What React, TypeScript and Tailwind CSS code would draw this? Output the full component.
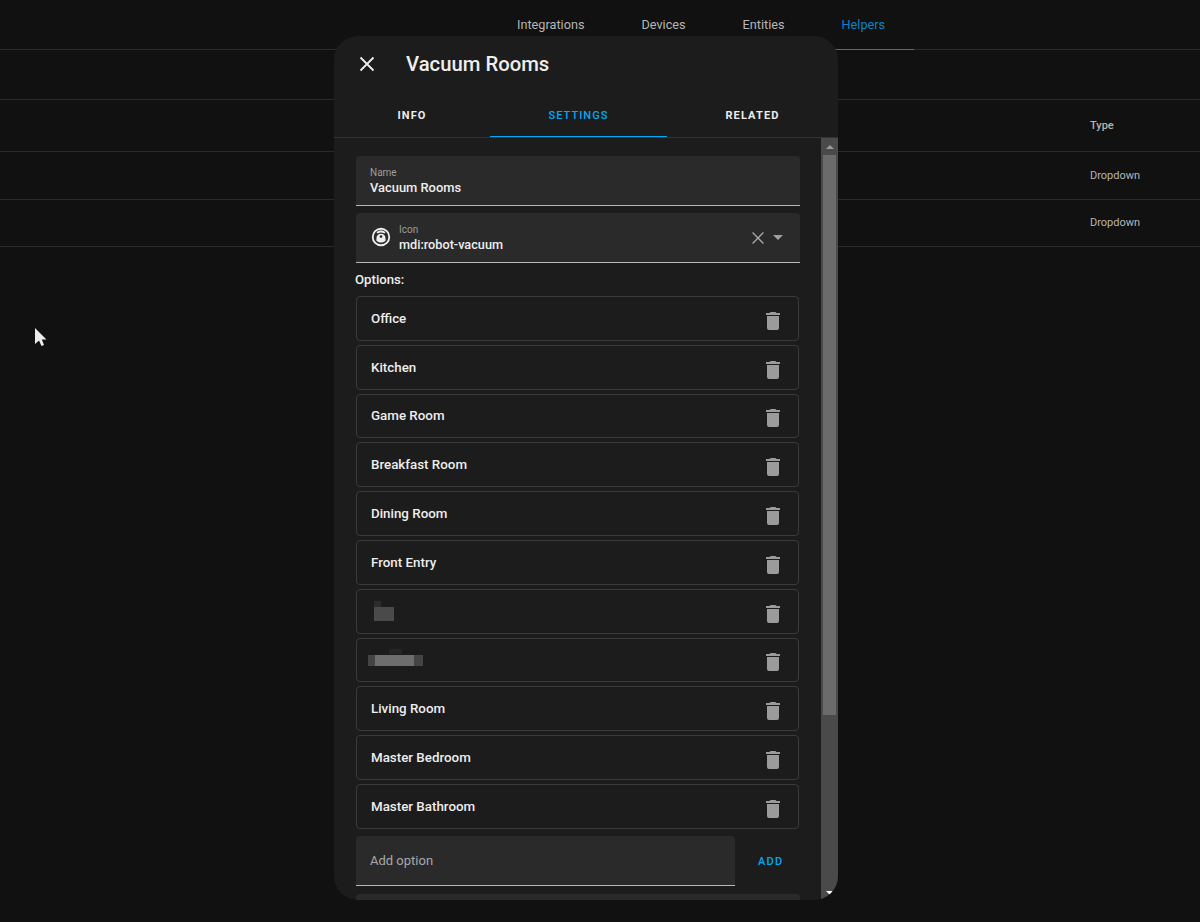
import type { ReactNode } from "react";

const trash = "M19,4H15.5L14.5,3H9.5L8.5,4H5V6H19M6,19A2,2 0 0,0 8,21H16A2,2 0 0,0 18,19V7H6V19Z";
const vacuum =
  "M12,2A10,10 0 0,1 22,12A10,10 0 0,1 12,22A10,10 0 0,1 2,12A10,10 0 0,1 12,2M12,4A8,8 0 0,0 4,12A8,8 0 0,0 12,20A8,8 0 0,0 20,12A8,8 0 0,0 12,4M12,5C13.9,5 15.6,5.7 16.9,6.8L15.6,8.1C14.6,7.4 13.4,7 12,7C10.6,7 9.4,7.4 8.4,8.1L7.1,6.8C8.4,5.7 10.1,5 12,5M12,8.5C14.8,8.5 17,10.7 17,13.5V16C15.6,17.2 13.9,18 12,18C10.1,18 8.4,17.2 7,16V13.5C7,10.7 9.2,8.5 12,8.5M12,10A1.5,1.5 0 0,0 10.5,11.5A1.5,1.5 0 0,0 12,13A1.5,1.5 0 0,0 13.5,11.5A1.5,1.5 0 0,0 12,10Z";

function Icon({ d, className }: { d: string; className: string }) {
  return (
    <svg viewBox="0 0 24 24" fill="currentColor" className={className}>
      <path d={d} />
    </svg>
  );
}

function Cross({ className }: { className: string }) {
  return (
    <svg viewBox="0 0 24 24" fill="none" stroke="currentColor" className={className}>
      <path d="M5.5 5.5L18.5 18.5M18.5 5.5L5.5 18.5" />
    </svg>
  );
}

function Field({ children, className }: { children: ReactNode; className: string }) {
  return (
    <div className={`shrink-0 rounded-t-[4px] border-b border-[#b8b8b8] bg-[#2a2a2a] ${className}`}>
      {children}
    </div>
  );
}

function OptionRow({ label, children }: { label?: string; children?: ReactNode }) {
  return (
    <div className="relative flex h-[44.8px] w-[443px] shrink-0 items-center justify-between rounded-[4px] border border-[#3a3a3a] pl-[14px] pr-[13px]">
      <span className="pt-[1px] text-[13.35px] font-medium text-[#eeeeee]">{label}</span>
      <Icon d={trash} className="mt-[5px] h-6 w-6 text-[#9b9b9b]" />
      {children}
    </div>
  );
}

const rows = ["Office", "Kitchen", "Game Room", "Breakfast Room", "Dining Room", "Front Entry"];
const lastRows = ["Living Room", "Master Bedroom", "Master Bathroom"];

export default function App() {
  return (
    <div className="relative h-[922px] w-[1200px] overflow-hidden bg-[#111111] font-['Roboto',sans-serif]">
      <nav className="flex h-[50px] items-center border-b border-[#2b2b2b] pl-[488.5px] text-[12.7px] text-[#b5b5b5]">
        <span className="flex h-[50px] items-center px-[28.5px] pt-[1px]">Integrations</span>
        <span className="flex h-[50px] items-center px-[28.5px] pt-[1px]">Devices</span>
        <span className="flex h-[50px] items-center px-[28.5px] pt-[1px]">Entities</span>
        <span className="flex h-[50px] items-center border-b border-[#0a84c6] px-[28.5px] pt-[1px] text-[#0a84c6]">Helpers</span>
      </nav>
      <div className="h-[50px] border-b border-[#2b2b2b]" />
      <div className="flex h-[52px] items-center justify-start border-b border-[#2b2b2b] pl-[1090px] pt-[2px] text-[11px] font-medium text-[#b5b5b5]">
        Type
      </div>
      <div className="flex h-[48px] items-center border-b border-[#2b2b2b] pl-[1090px] pt-[2px] text-[11px] text-[#b5b5b5]">
        Dropdown
      </div>
      <div className="flex h-[47px] items-center border-b border-[#2b2b2b] pl-[1090px] text-[11px] text-[#b5b5b5]">
        Dropdown
      </div>

      <svg viewBox="0 0 12 18" className="absolute left-[35px] top-[328px] h-[18px] w-[12px]">
        <path d="M0 0V16L4 12.5L6.5 18L9 17L6.8 11.5H11.5Z" fill="#ededed" />
      </svg>

      <section className="absolute left-[334px] top-[36px] flex h-[864px] w-[504px] flex-col overflow-hidden rounded-[24px] bg-[#1c1c1c]">
        <header className="flex h-[56px] shrink-0 items-center pl-[20.5px]">
          <Cross className="h-6 w-6 stroke-[1.8] text-[#eeeeee]" />
          <h2 className="ml-[27.5px] text-[20.3px] font-medium text-[#eeeeee]">Vacuum Rooms</h2>
        </header>

        <div className="flex h-[46px] shrink-0 border-b border-[#333333] text-[11px] font-bold tracking-[1.15px]">
          <div className="flex w-[156px] items-center justify-center pt-[3px] text-[#eeeeee]">INFO</div>
          <div className="flex w-[177px] items-center justify-center border-b border-[#03a9f4] pt-[4px] font-medium tracking-[1.05px] text-[#03a9f4]">SETTINGS</div>
          <div className="flex w-[171px] items-center justify-center pt-[3px] text-[#eeeeee]">RELATED</div>
        </div>

        <div className="flex min-h-0 flex-1">
          <div className="flex min-w-0 flex-1 flex-col overflow-hidden pl-[22px] pr-[21px] pt-[18px]">
            <Field className="h-[50px] w-[444px] pl-[14px] pt-[11px]">
              <div className="text-[10px] leading-[12px] text-[#9d9d9d]">Name</div>
              <div className="text-[12.9px] font-medium leading-[17px] text-[#eeeeee]">Vacuum Rooms</div>
            </Field>
            <Field className="mt-[7px] flex h-[50px] w-[444px] items-center pl-[14px] pr-[17px]">
              <Icon d={vacuum} className="mb-[2px] h-[22px] w-[22px] text-[#eeeeee]" />
              <div className="ml-[7px] flex-1 pt-[3px]">
                <div className="text-[10px] leading-[12px] text-[#9d9d9d]">Icon</div>
                <div className="text-[12.7px] font-medium leading-[18px] text-[#eeeeee]">mdi:robot-vacuum</div>
              </div>
              <Cross className="h-5 w-5 stroke-[1.6] text-[#a8a8a8]" />
              <svg viewBox="0 0 10 5" className="ml-[5px] h-[5px] w-[10px] text-[#a0a0a0]">
                <path d="M0 0H10L5 5Z" fill="currentColor" />
              </svg>
            </Field>

            <div className="-ml-[1px] mb-[8px] mt-[8px] text-[13.2px] font-medium leading-[17px] text-[#eeeeee]">Options:</div>

            <div className="flex flex-col gap-[4px]">
              {rows.map((r) => (
                <OptionRow key={r} label={r} />
              ))}
              <OptionRow>
                <div className="absolute left-[17px] top-[17px] h-[14px] w-[20px] bg-[#4a4a4a]" />
                <div className="absolute left-[17px] top-[11px] h-[6px] w-[7px] bg-[#2c2c2c]" />
              </OptionRow>
              <OptionRow>
                <div className="absolute left-[11px] top-[16px] h-[11px] w-[55px] bg-[#444444]" />
                <div className="absolute left-[18px] top-[16px] h-[11px] w-[39px] bg-[#6e6e6e]" />
                <div className="absolute left-[32px] top-[10px] h-[5px] w-[13px] bg-[#262626]" />
              </OptionRow>
              {lastRows.map((r) => (
                <OptionRow key={r} label={r} />
              ))}
            </div>

            <div className="mt-[7px] flex shrink-0 items-center">
              <Field className="flex h-[50px] w-[379px] items-center pl-[14px] text-[13px] text-[#a8a8a8]">Add option</Field>
              <span className="ml-[23px] pt-[2px] text-[11px] font-medium tracking-[1.25px] text-[#03a9f4]">ADD</span>
            </div>
            <Field className="mt-[8px] h-[50px] w-[444px]">
              <span />
            </Field>
          </div>

          <div className="flex w-[17px] shrink-0 flex-col bg-[#4a4a4a]">
            <div className="flex h-[17px] shrink-0 items-center justify-center">
              <svg viewBox="0 0 8 4" className="h-[4px] w-[8px]">
                <path d="M0 4H8L4 0Z" fill="#9a9a9a" />
              </svg>
            </div>
            <div className="mx-[2px] h-[560px] bg-[#6b6b6b]" />
            <div className="flex-1" />
            <div className="flex h-[14px] shrink-0 items-center justify-center">
              <svg viewBox="0 0 8 4" className="h-[4px] w-[8px]">
                <path d="M0 0H8L4 4Z" fill="#ffffff" />
              </svg>
            </div>
          </div>
        </div>
      </section>
    </div>
  );
}
